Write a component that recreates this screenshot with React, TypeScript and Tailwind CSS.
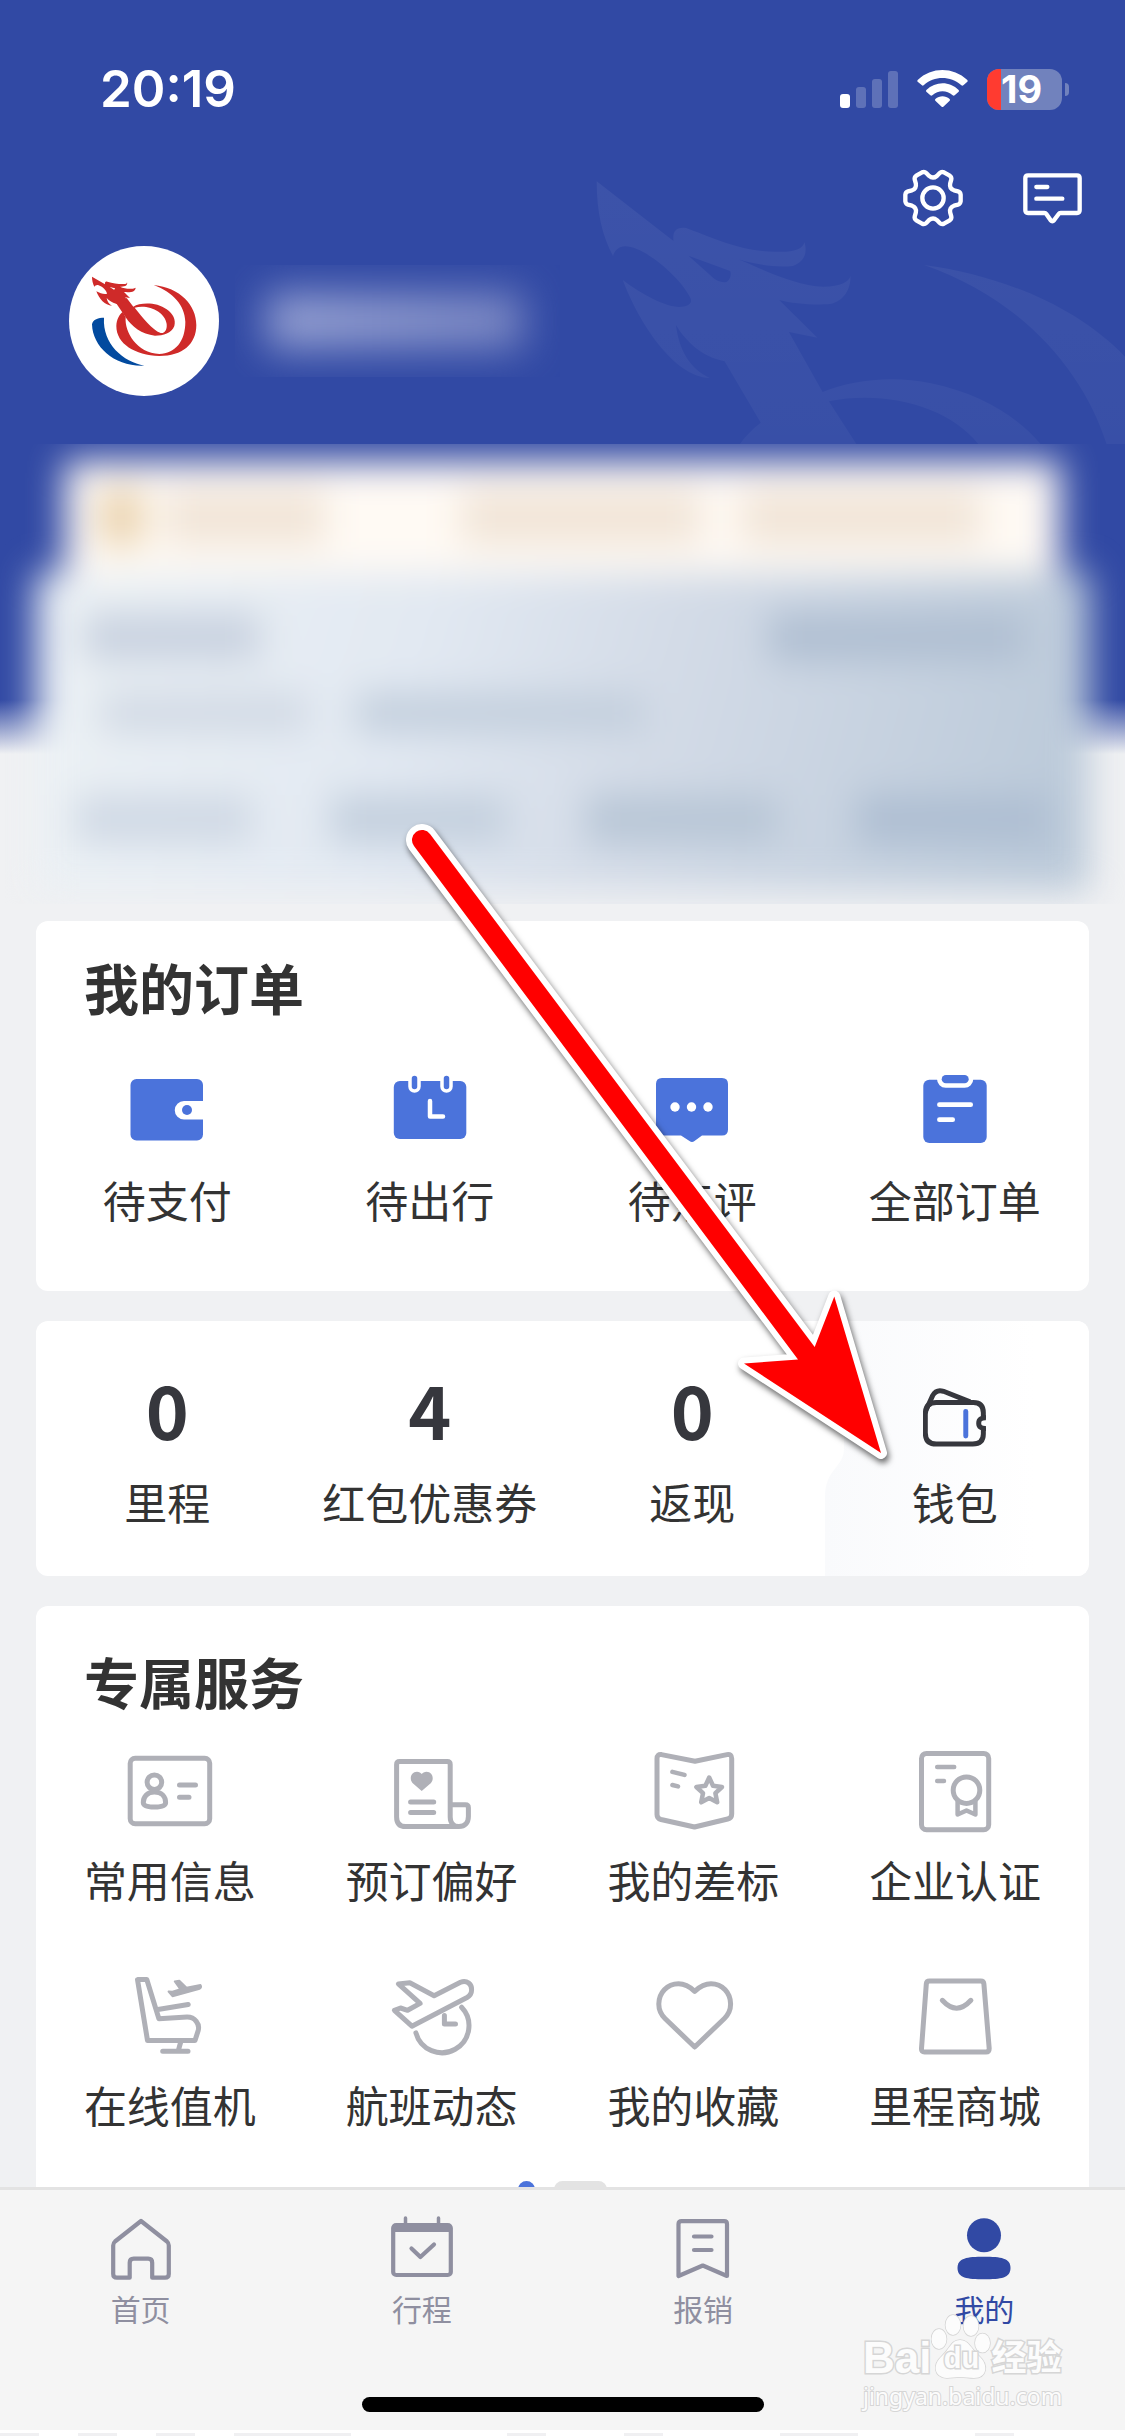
import type { ReactNode } from "react";

const BLUE = "#4b73db";

/* ---------- status bar ---------- */

function StatusBar() {
  return (
    <div className="mt-[62px] flex h-[52px] items-center justify-between pr-14 pl-[100px] text-white">
      <time className="font-['Inter',sans-serif] text-[51px] leading-[52px] font-semibold">20:19</time>
      <div className="flex items-center">
        <svg className="mr-[19px] h-[37px] w-[58px]" viewBox="0 0 58 37" fill="#fff" aria-label="信号">
          <rect x="0" y="23" width="10" height="14" rx="3" />
          <g opacity=".22">
            <rect x="16" y="16" width="10" height="21" rx="3" />
            <rect x="32" y="8" width="10" height="29" rx="3" />
            <rect x="48" y="0" width="10" height="37" rx="3" />
          </g>
        </svg>
        <svg className="mr-[19px] h-[38px] w-[51px]" viewBox="0 0 153 114" fill="#fff" aria-label="无线网络">
          <path d="M2 30C44-10 108-10 151 30q2 3 0 5L139 46q-3 2-6 0C100 17 52 17 20 46q-3 2-5 0L2 35q-2-2 0-5Z" />
          <path d="M28 60C56 33 98 33 125 60q2 3 0 5L113 76q-3 2-6 0C89 60 64 60 46 76q-3 2-6 0L28 65q-2-2 0-5Z" />
          <path d="M55 87C68 76 85 76 98 87q2 3 0 5L79 110q-3 2-5 0L55 92q-2-2 0-5Z" />
        </svg>
        <div className="flex items-center gap-[3px]">
          <div className="flex h-[41px] w-[75px] items-center rounded-[12px] bg-[#7182bd]">
            <span className="h-full w-[14px] rounded-l-[12px] bg-[#ff3b30]" />
            <span className="font-['Inter',sans-serif] text-[38px] leading-[48px] font-bold">19</span>
          </div>
          <span className="h-[13px] w-1 rounded-r-full bg-[#7182bd]" />
        </div>
      </div>
    </div>
  );
}

/* ---------- header icons ---------- */

/* Six rounded teeth around the origin, joined by concave notches. */
function gearPath() {
  const rot = (x: number, y: number, k: number) => {
    const a = (k * Math.PI) / 3;
    return `${(x * Math.cos(a) - y * Math.sin(a)).toFixed(1)} ${(x * Math.sin(a) + y * Math.cos(a)).toFixed(1)}`;
  };
  let d = `M${rot(63, -23, 0)}`;
  for (let k = 0; k < 6; k++) {
    d += `L${rot(75, -20, k)}Q${rot(82, -18, k)} ${rot(83, -10, k)}`;
    d += `L${rot(83, 10, k)}Q${rot(82, 18, k)} ${rot(75, 20, k)}`;
    d += `L${rot(63, 23, k)}Q${rot(49, 28, k)} ${rot(63, -23, k + 1)}`;
  }
  return d + "Z";
}

function GearIcon() {
  return (
    <svg className="h-[60px] w-[60px]" viewBox="-90 -90 180 180" fill="none" stroke="#fff" strokeWidth="13" strokeLinejoin="round">
      <path d={gearPath()} />
      <circle r="32" />
    </svg>
  );
}

function MessageIcon() {
  return (
    <svg className="h-[51px] w-[59px]" viewBox="611 429 177 153" fill="none" stroke="#fff" strokeWidth="13" strokeLinecap="round" strokeLinejoin="round">
      <path d="M626 436H773q8 0 8 8V541q0 8-8 8H724q-4 0-6 3L704 571q-5 6-10 0L681 552q-2-3-6-3H626q-8 0-8-8V444q0-8 8-8Z" />
      <path d="M651 471H684M651 506H729" />
    </svg>
  );
}

function DragonBackdrop() {
  return (
    <svg
      className="pointer-events-none absolute top-40 right-0 h-[284px] w-[545px]"
      viewBox="0 0 1568 852"
      preserveAspectRatio="none"
      aria-hidden="true"
    >
      <defs>
        <linearGradient id="dragonFade" gradientUnits="userSpaceOnUse" x1="0" y1="64" x2="0" y2="852">
          <stop offset="0" stopColor="#fff" stopOpacity=".055" />
          <stop offset="1" stopColor="#fff" stopOpacity=".035" />
        </linearGradient>
      </defs>
      <path
        fill="url(#dragonFade)"
        fillRule="evenodd"
        d="M48 64L269 243C266 215 275 200 305 204C370 228 460 275 560 275C610 278 640 270 646 247C655 280 645 305 612 318C560 324 500 312 455 298C530 330 620 378 700 380C750 380 775 365 778 348C780 390 755 430 712 433C660 435 610 430 573 420L683 533L601 516L698 696C780 660 900 645 1010 670C1150 700 1260 770 1325 852H1146C1060 740 880 690 716 724L795 852H460C475 830 495 808 520 788L416 604C350 590 305 545 276 495C285 570 315 625 373 654C270 650 170 490 123 360C180 405 245 440 285 441C310 440 325 430 318 415C295 360 190 260 130 259C112 260 100 270 95 288C65 230 48 160 48 64ZM312 287L375 346C385 358 405 370 421 366C430 362 437 345 432 333Z"
      />
      <path fill="url(#dragonFade)" d="M990 315C1200 345 1420 430 1568 590V852H1515C1450 640 1280 420 990 315Z" />
    </svg>
  );
}

function Avatar() {
  return (
    <svg className="h-[150px] w-[150px] shrink-0 rounded-full bg-white" viewBox="87 78 450 450" role="img" aria-label="头像">
      <g fill="#cf2a29">
        <path d="M341 195C420 203 469 255 469 315C469 372 428 408 358 408C285 405 229 372 229 318C230 298 238 284 248 276L257 292C253 335 290 400 358 402C405 400 436 365 436 305C434 255 400 218 341 195Z" />
        <path
          fillRule="evenodd"
          d="M260 234L280 260C300 247 350 245 380 268C400 282 408 300 403 318C395 340 370 347 345 347C305 343 275 320 257 292L228 249ZM284 263C310 295 335 328 362 339C372 341 382 332 380 312C375 275 325 252 284 263Z"
        />
        <path
          fillRule="evenodd"
          d="M156 170L195 193C194 186 197 183 202 185C220 191 240 193 256 192Q261 192 261 187C264 196 256 201 240 200C255 207 275 209 287 203C286 214 276 218 252 216L270 234L256 232L262 246L230 252C215 248 206 241 200 234C202 245 206 252 216 257C195 257 177 236 169 214C180 220 194 224 201 221C200 212 188 199 174 195Q166 194 163 200C158 190 156 180 156 170ZM209 201L222 209Q226 208 225 205Z"
        />
      </g>
      <path fill="#024a9f" d="M192 293C176 293 158 298 156 313C158 382 225 441 313 437C250 425 187 372 192 293Z" />
    </svg>
  );
}

/* ---------- blurred member area ---------- */

function MemberArea() {
  return (
    <div className="mt-12 h-[460px] overflow-hidden" aria-hidden="true">
      <div className="px-9 pt-[17px] blur-[18px]">
        <div className="mx-[29px] flex h-[112px] items-center gap-6 bg-[#fffaf4] px-9">
          <span className="h-14 w-10 bg-[#e8cfa8]" />
          <span className="h-14 w-40 bg-[#f1e5d8]" />
          <span className="ml-28 h-14 w-60 bg-[#f1e5d8]" />
          <span className="ml-4 h-14 w-60 bg-[#f1e5d8]" />
        </div>
        <div className="flex h-[318px] flex-col bg-[linear-gradient(105deg,#edf2f5_0%,#e2e9f2_35%,#d3dbe7_58%,#b9c8d8_100%)] px-10 pt-[40px]">
          <div className="flex justify-between pr-6 pl-2">
            <span className="h-12 w-44 bg-[#c9d2e0]" />
            <span className="h-12 w-64 bg-[#b0bfd2]" />
          </div>
          <div className="mt-8 flex gap-12 pl-6">
            <span className="h-10 w-52 bg-[#d2dae5]" />
            <span className="h-10 w-72 bg-[#c3cfdd]" />
          </div>
          <div className="mt-[62px] flex justify-between">
            <span className="h-12 w-44 bg-[#d0d9e5]" />
            <span className="h-12 w-44 bg-[#c4d0de]" />
            <span className="h-12 w-48 bg-[#b8c6d6]" />
            <span className="h-12 w-48 bg-[#aebed2]" />
          </div>
        </div>
      </div>
    </div>
  );
}

function Hero() {
  return (
    <header className="relative flex flex-col bg-[linear-gradient(#3149a4_0px,#3149a4_700px,#f0f1f3_754px)] pt-px">
      <DragonBackdrop />
      <StatusBar />
      <div className="mt-[53px] flex h-[60px] items-center justify-end gap-[60px] pr-[43px]">
        <button type="button" aria-label="设置">
          <GearIcon />
        </button>
        <button type="button" aria-label="消息">
          <MessageIcon />
        </button>
      </div>
      <div className="mt-[18px] flex items-center gap-4 pl-[69px]">
        <Avatar />
        <div className="h-[112px] w-[325px] overflow-hidden" aria-hidden="true">
          <div className="px-8 py-7 blur-[20px]">
            <div className="h-14 w-64 bg-gradient-to-r from-[#97a2d2] to-[#7986c2]" />
          </div>
        </div>
      </div>
      <MemberArea />
    </header>
  );
}

/* ---------- order icons ---------- */

function OrderIcon({ children }: { children: ReactNode }) {
  return (
    <svg className="h-[70px] w-[74px]" viewBox="0 0 74 70" fill={BLUE} strokeLinecap="round" strokeLinejoin="round">
      {children}
    </svg>
  );
}

const orders: { label: string; icon: ReactNode }[] = [
  {
    label: "待支付",
    icon: (
      <OrderIcon>
        <rect x=".5" y="4" width="72.5" height="61.5" rx="6" />
        <path fill="#fff" d="M74 26H54a9 9 0 0 0 0 18.500H74Z" />
        <circle cx="57" cy="35" r="5" />
      </OrderIcon>
    ),
  },
  {
    label: "待出行",
    icon: (
      <OrderIcon>
        <rect x=".8" y="6" width="72.500" height="58" rx="6" />
        <g stroke="#fff" strokeWidth="3.500">
          <rect x="17" y="-1" width="9" height="17" rx="4.500" />
          <rect x="49" y="-1" width="9" height="17" rx="4.500" />
        </g>
        <path d="M37 26V41.500H50" fill="none" stroke="#fff" strokeWidth="4.500" />
      </OrderIcon>
    ),
  },
  {
    label: "待点评",
    icon: (
      <OrderIcon>
        <path d="M7 3H67q6 0 6 6V54.500q0 6-6 6H47L39.500 66q-2.500 2-5 0L26 60.500H7q-6 0-6-6V9q0-6 6-6Z" />
        <g fill="#fff">
          <circle cx="20" cy="32" r="4.700" />
          <circle cx="36.500" cy="32" r="4.700" />
          <circle cx="53" cy="32" r="4.700" />
        </g>
      </OrderIcon>
    ),
  },
  {
    label: "全部订单",
    icon: (
      <OrderIcon>
        <rect x="5.300" y="4.700" width="63.400" height="63.300" rx="6" />
        <path fill="#fff" d="M19 0H55.300V4a8.700 8.700 0 0 1-8.700 8.700H27.700A8.700 8.700 0 0 1 19 4Z" />
        <rect x="23.700" y="0" width="27" height="8.300" rx="4.150" />
        <path d="M21.400 29.700H52.700M21.400 44.700H34.700" stroke="#fff" strokeWidth="4.700" />
      </OrderIcon>
    ),
  },
];

function WalletIcon() {
  return (
    <svg className="h-[59px] w-[63px]" viewBox="0 0 190 176" fill="none" stroke="#36373d" strokeWidth="15">
      <path d="M182 91V74Q182 43 152 43H40Q7 43 7 78V134Q7 168 40 168H150Q182 168 182 138V118" />
      <path d="M190 89Q168 88 168 105T190 121" />
      <path d="M9 66L29 22Q40 2 62 9L142 41" />
      <path d="M129 70V144" stroke={BLUE} strokeLinecap="round" />
    </svg>
  );
}

/* ---------- service icons ---------- */

function ServiceIcon({ children }: { children: ReactNode }) {
  return (
    <svg
      className="h-[84px] w-[88px]"
      viewBox="0 0 88 84"
      fill="none"
      stroke="#afb0b7"
      strokeWidth="5"
      strokeLinecap="round"
      strokeLinejoin="round"
    >
      {children}
    </svg>
  );
}

const services: { label: string; icon: ReactNode }[] = [
  {
    label: "常用信息",
    icon: (
      <ServiceIcon>
        <rect x="4.200" y="8.200" width="79.500" height="65.500" rx="5" />
        <circle cx="28.400" cy="32.200" r="7.300" />
        <path d="M28.400 42C21 42 17.300 47 17.300 52.500C17.300 56 21 57 28.400 57S39.600 56 39.600 52.500C39.600 47 36 42 28.400 42ZM53.500 35H69.500M53.500 47.200H63" />
      </ServiceIcon>
    ),
  },
  {
    label: "预订偏好",
    icon: (
      <ServiceIcon>
        <path d="M62.200 54.700V14.500q0-3-3-3H11.600q-3 0-3 3V67q0 9.600 9 9.600H71c6 0 9.400-4 9.400-10V57.700q0-3-3-3H62.200V67c0 6 3.500 9.600 8.500 9.600" />
        <path d="M22.600 52H45.700M22.600 62.400H45.700" />
        <path
          d="M33.700 41L24.500 33C21 29 23 21.800 29 21.800C31 21.800 33 23 33.700 24C34.500 23 36.500 21.800 38.500 21.800C44.500 21.800 46.500 29 43 33Z"
          fill="#afb0b7"
          stroke="none"
        />
      </ServiceIcon>
    ),
  },
  {
    label: "我的差标",
    icon: (
      <ServiceIcon>
        <path d="M12.500 4.600L46 11.300L78 4.600q4.700-.8 4.700 4V64q0 4-4 5L45.500 77L12 69.500q-4-1-4-5V8.600q0-4.600 4.500-4Z" />
        <path d="M23.400 21.900L35.500 24.900M23.400 35L29 36.400" strokeWidth="4.500" />
        <path d="M60.200 27.500L64 35.800L73 37L66.400 43.200L68.200 52.300L60.200 48L52.200 52.300L54 43.200L47.400 37L56.400 35.800Z" strokeWidth="4.500" />
      </ServiceIcon>
    ),
  },
  {
    label: "企业认证",
    icon: (
      <ServiceIcon>
        <rect x="10.500" y="3.400" width="67.200" height="76.300" rx="5" />
        <path d="M26.200 16.900H43.200M26.200 31H33" strokeWidth="4.500" />
        <circle cx="55.500" cy="40.200" r="13.300" />
        <path d="M46.600 51.500V64.500L55.500 60.500L64.400 64.500V51.500" strokeWidth="4.500" />
      </ServiceIcon>
    ),
  },
  {
    label: "在线值机",
    icon: (
      <ServiceIcon>
        <path d="M11.500 4.600H20.800L32.900 43.700L61 42.100C69 42 74 49 72.200 55.500L69 65.500H21.500Z" />
        <path d="M31.900 34.500L62.200 29.500M54.700 67L52.600 74.700M36.700 76.200H62" />
        <path
          d="M42.600 16.500L46.500 21.200L73.600 13.800Q76 12 74.500 10L60.500 12.800L53.300 5.800L48.800 6.500L54.500 14.300L46.500 16.800Z"
          fill="#afb0b7"
          strokeWidth="2"
        />
      </ServiceIcon>
    ),
  },
  {
    label: "航班动态",
    icon: (
      <ServiceIcon>
        <path d="M10.400 8.900L21.800 7.700L46.100 20.700L72.500 7.200C79 4.500 84 9.500 83.600 15Q83.500 20 79 22.500L23.900 51.200L6.400 35.300L12.500 33L19.600 35.300L32.100 28.400Z" />
        <path d="M73.600 32.200A27 27 0 1 1 27.900 57.800M56.400 40.600V49H67.500" />
      </ServiceIcon>
    ),
  },
  {
    label: "我的收藏",
    icon: (
      <ServiceIcon>
        <path d="M45.700 16.300C40 11 35 8.800 29.500 8.800C18 8.800 9.800 18 9.800 29C9.800 35 12 39.500 16 43.500L45.700 72L75.400 43.500C79.400 39.500 81.600 35 81.600 29C81.600 18 73.500 8.800 62 8.800C56.500 8.800 51.500 11 45.700 16.300Z" />
      </ServiceIcon>
    ),
  },
  {
    label: "里程商城",
    icon: (
      <ServiceIcon>
        <path d="M18.500 6H69.700q3 0 3.200 3L78.200 73.500q0 3.500-3.200 3.500H13.500q-3.200 0-3-3.500L15.300 9q.2-3 3.200-3Z" />
        <path d="M31.300 25.300Q45.600 41 59.900 25.300" />
      </ServiceIcon>
    ),
  },
];

/* ---------- cards ---------- */

function Label({ children }: { children: ReactNode }) {
  return <span className="text-[43px] leading-[60px] text-[#333]">{children}</span>;
}

function CardTitle({ children }: { children: ReactNode }) {
  return <h2 className="px-12 text-[55px] leading-[64px] font-bold text-[#333]">{children}</h2>;
}

function OrdersCard() {
  return (
    <section className="rounded-[12px] bg-white pt-[33px] pb-[62px]">
      <CardTitle>我的订单</CardTitle>
      <div className="mt-[57px] grid grid-cols-4 pr-[3px]">
        {orders.map((o) => (
          <button key={o.label} type="button" className="flex flex-col items-center gap-6">
            {o.icon}
            <Label>{o.label}</Label>
          </button>
        ))}
      </div>
    </section>
  );
}

const assets = [
  { label: "里程", value: "0" },
  { label: "红包优惠券", value: "4" },
  { label: "返现", value: "0" },
];

function AssetsCard() {
  return (
    <section className="grid grid-cols-4 overflow-hidden rounded-[12px] bg-white pr-[3px]">
      {assets.map((a) => (
        <button key={a.label} type="button" className="flex flex-col items-center gap-[27px] pt-[51px] pb-[45px]">
          <span className="text-[73px] leading-[72px] font-bold text-[#36373d]">{a.value}</span>
          <Label>{a.label}</Label>
        </button>
      ))}
      <button type="button" className="relative flex flex-col items-center gap-[27px] pt-[51px] pb-[45px]">
        <svg className="absolute inset-0 h-full w-full" viewBox="0 0 263 255" preserveAspectRatio="none" aria-hidden="true">
          <defs>
            <linearGradient id="walletFade">
              <stop offset="0" stopColor="#f9fafc" />
              <stop offset=".8" stopColor="#ffffff" />
            </linearGradient>
          </defs>
          <path d="M20 0V128C20 146 1 148 1 176V255H263V0Z" fill="url(#walletFade)" />
        </svg>
        <span className="relative flex h-[72px] items-start pt-4">
          <WalletIcon />
        </span>
        <span className="relative flex">
          <Label>钱包</Label>
        </span>
      </button>
    </section>
  );
}

function ServicesCard() {
  return (
    <section className="rounded-[12px] bg-white pt-[42px] pb-8">
      <CardTitle>专属服务</CardTitle>
      <div className="mt-[38px] grid grid-cols-4 gap-y-[66px] px-[3px]">
        {services.map((s) => (
          <button key={s.label} type="button" className="flex flex-col items-center gap-[15px]">
            {s.icon}
            <Label>{s.label}</Label>
          </button>
        ))}
      </div>
      <div className="mt-[47px] flex justify-center gap-[19px]">
        <span className="h-[17px] w-[17px] rounded-full bg-[#4b73db]" />
        <span className="h-[17px] w-[53px] rounded-full bg-[#e3e3e3]" />
      </div>
    </section>
  );
}

/* ---------- pointer arrow ---------- */

function PointerArrow() {
  return (
    <svg
      className="pointer-events-none absolute top-[810px] left-[400px] h-[670px] w-[500px] [filter:drop-shadow(2px_4px_3px_rgba(0,0,0,0.6))]"
      viewBox="400 810 500 670"
      aria-hidden="true"
    >
      <path
        d="M430 834L814.700 1347L834.300 1296.500L881 1453L744 1363.500L798 1359.500L414 846A10 10 0 0 1 430 834Z"
        fill="#f00"
        stroke="#fff"
        strokeWidth="12"
        strokeLinejoin="round"
        paintOrder="stroke"
      />
    </svg>
  );
}

/* ---------- bottom navigation ---------- */

function NavIcon({ children }: { children: ReactNode }) {
  return (
    <svg
      className="h-[64px] w-[62px]"
      viewBox="0 0 62 64"
      fill="none"
      stroke="currentColor"
      strokeWidth="4.200"
      strokeLinecap="round"
      strokeLinejoin="round"
    >
      {children}
    </svg>
  );
}

const tabs: { label: string; active?: boolean; icon: ReactNode }[] = [
  {
    label: "首页",
    icon: (
      <NavIcon>
        <path d="M31 5L5 25.500Q3.200 27 3.200 29.500V58Q3.200 61.700 7 61.700H19.700V46.700Q19.700 42.700 23.700 42.700H38.200Q42.200 42.700 42.200 46.700V61.700H55Q58.800 61.700 58.800 58V29.500Q58.800 27 57 25.500Z" />
      </NavIcon>
    ),
  },
  {
    label: "行程",
    icon: (
      <NavIcon>
        <rect x="2.200" y="9" width="57.600" height="50" rx="3" />
        <path d="M3 9H59V16H3Z" fill="currentColor" stroke="none" />
        <path d="M14.500 2V9M47.500 2V9" strokeWidth="3.500" />
        <path d="M20.500 32.500L29.400 41L43 28.500" />
      </NavIcon>
    ),
  },
  {
    label: "报销",
    icon: (
      <NavIcon>
        <path d="M6.500 60V8Q6.500 5.200 9.500 5.200H52.200Q55 5.200 55 8V60L30.800 49.500Z" />
        <path d="M22 20.500H39.500M22 34H39.500" />
      </NavIcon>
    ),
  },
  {
    label: "我的",
    active: true,
    icon: (
      <NavIcon>
        <g fill="currentColor" stroke="none">
          <circle cx="31" cy="19.200" r="17" />
          <path d="M31 40.700C48 40.700 57.500 42 57.500 52S48 63.300 31 63.300S4.500 62 4.500 52S14 40.700 31 40.700Z" />
        </g>
      </NavIcon>
    ),
  },
];

/* Segments of the strip under the bar: [share of the width, filled]. */
const strip: [number, boolean][] = [
  [39, true], [39, false], [39, true], [39, false], [39, true], [39, false], [117, true], [156, false],
  [39, true], [78, false], [39, true], [117, false], [78, true], [117, false], [39, true], [111, false],
];

function BottomNav() {
  return (
    <footer className="shrink-0">
      <nav className="border-t-[3px] border-[#e3e3e3] bg-[#f5f5f5] pt-[26px] pb-[18px]">
        <div className="grid grid-cols-4">
          {tabs.map((t) => (
            <a
              key={t.label}
              href="#"
              aria-current={t.active ? "page" : undefined}
              className={`flex flex-col items-center gap-2 ${t.active ? "text-[#3149a4]" : "text-[#8f8fa0]"}`}
            >
              {t.icon}
              <span className="text-[30px] leading-[40px]">{t.label}</span>
            </a>
          ))}
        </div>
        <div className="mx-auto mt-[69px] h-[15px] w-[402px] rounded-full bg-black" />
      </nav>
      <div className="flex h-[6px] bg-white pt-[3px]" aria-hidden="true">
        {strip.map(([grow, filled], i) => (
          <span key={i} className={filled ? "bg-[#f0f0f2]" : ""} style={{ flexGrow: grow }} />
        ))}
      </div>
    </footer>
  );
}

function SourceMark() {
  return (
    <div className="pointer-events-none absolute right-[60px] bottom-[24px] w-[202px] font-['Liberation_Sans','Noto_Sans_CJK_SC',sans-serif] text-[#fcfcfc] [paint-order:stroke_fill] [-webkit-text-stroke:3px_#d6d6d6]">
      <div className="flex items-end">
        <span className="text-[44px] leading-[44px] font-bold">Bai</span>
        <span className="relative flex h-[66px] w-[60px] items-end justify-center pb-2">
          <svg className="absolute inset-0" viewBox="0 0 60 66" fill="#fcfcfc" stroke="#d4d4d4" strokeWidth="1.500">
            <ellipse cx="8" cy="25" rx="7.500" ry="10" />
            <ellipse cx="22" cy="11" rx="7.500" ry="10" />
            <ellipse cx="40" cy="12" rx="7.500" ry="10" />
            <ellipse cx="51.500" cy="29" rx="7.500" ry="9.500" />
            <path d="M29 26C38 26 40 35 48 42C58 51 56 64 43 64C38 64 34 63 29 63S20 64 16 64C3 63 1 51 11 42C19 35 20 26 29 26Z" />
          </svg>
          <span className="relative text-[29px] leading-[28px] font-bold">du</span>
        </span>
        <span className="text-[35px] leading-[44px] font-bold">经验</span>
      </div>
      <div className="font-['Noto_Sans',sans-serif] text-[23px] leading-[32px] [-webkit-text-stroke:2px_#d6d6d6]">jingyan.baidu.com</div>
    </div>
  );
}

export default function App() {
  return (
    <div className="relative flex h-screen flex-col overflow-hidden bg-[#f0f1f3] font-['Noto_Sans_CJK_SC',sans-serif]">
      <main className="relative min-h-0 flex-1 overflow-y-auto [scrollbar-width:none]">
        <Hero />
        <div className="flex flex-col gap-[30px] px-9 pt-[17px] pb-8">
          <OrdersCard />
          <AssetsCard />
          <ServicesCard />
        </div>
        <PointerArrow />
      </main>
      <BottomNav />
      <SourceMark />
    </div>
  );
}
